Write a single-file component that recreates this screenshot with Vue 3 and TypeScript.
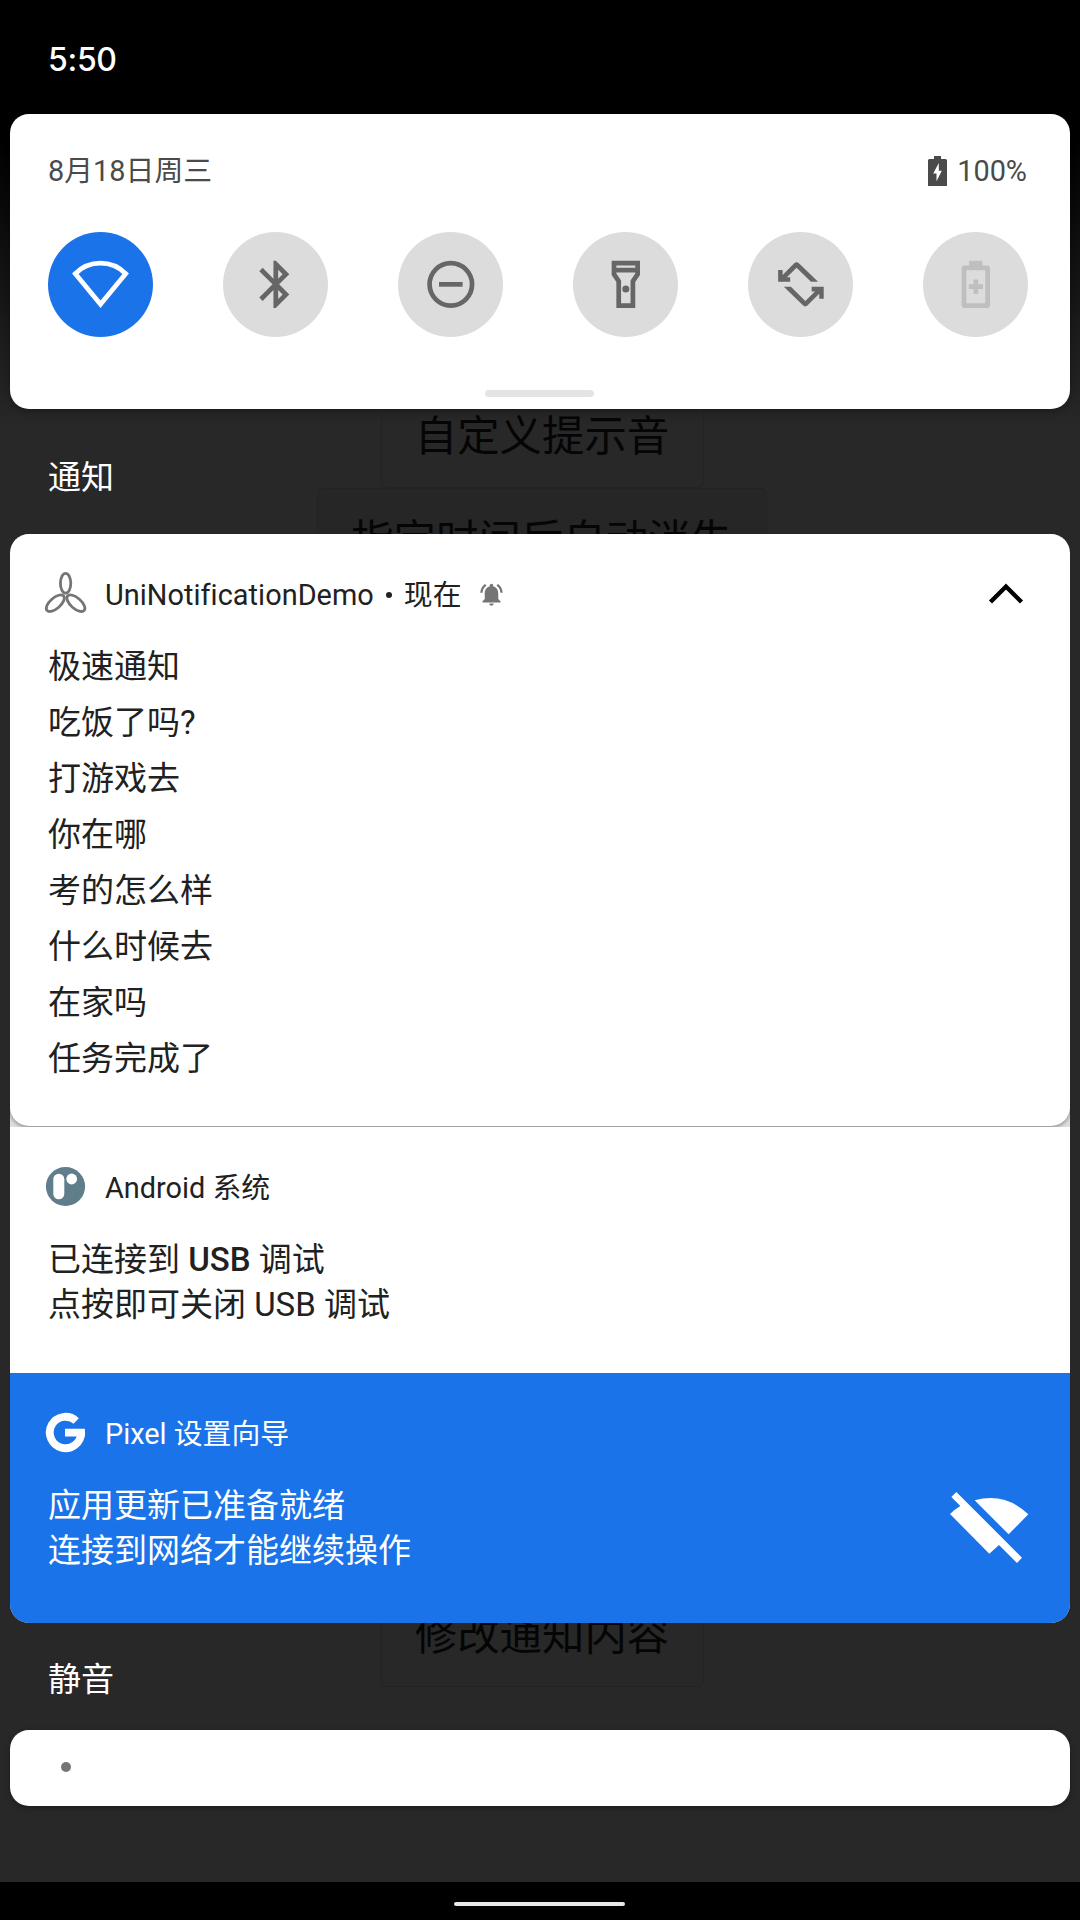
<script setup lang="ts">
interface Tile {
  name: string
  state: 'on' | 'off' | 'disabled'
}

const tiles: Tile[] = [
  { name: 'wifi', state: 'on' },
  { name: 'bluetooth', state: 'off' },
  { name: 'dnd', state: 'off' },
  { name: 'flashlight', state: 'off' },
  { name: 'rotate', state: 'off' },
  { name: 'saver', state: 'disabled' },
]

const messages: string[] = [
  '极速通知',
  '吃饭了吗?',
  '打游戏去',
  '你在哪',
  '考的怎么样',
  '什么时候去',
  '在家吗',
  '任务完成了',
]
</script>

<template>
  <div class="screen">
    <div class="backdrop">
      <div class="app-button first">自定义提示音</div>
      <div class="app-button wide">指定时间后自动消失</div>
      <div class="app-button last">修改通知内容</div>
    </div>

    <div class="shade">
      <header class="status"><span class="clock">5:50</span></header>

      <section class="quick card">
        <div class="quick-head">
          <span>8月18日周三</span>
          <span class="battery">
            <svg width="19" height="30" viewBox="0 0 19 30">
              <path fill="#4a4a4a" d="M6 0h7v3h4.500q1.500 0 1.500 1.500V30H0V4.500Q0 3 1.500 3H6z" />
              <path fill="#fff" d="M10.800 7L5.200 17.500h3.300V25.200L13.800 14.700h-3z" />
            </svg>
            100%
          </span>
        </div>
        <div class="tiles">
          <div v-for="tile in tiles" :key="tile.name" class="tile" :class="tile.state">
            <svg v-if="tile.name === 'wifi'" class="full" viewBox="0 0 105 105">
              <path d="M27.300 41.700A35.500 35.500 0 0 1 77.700 41.700L52.500 72.300z" fill="none" stroke="#fff" stroke-width="4.800" />
            </svg>
            <svg v-else class="glyph" viewBox="0 0 24 24">
              <path
                v-if="tile.name === 'bluetooth'"
                transform="translate(.2 0)"
                d="M17.710 7.710L12 2h-1v7.590L6.410 5 5 6.410 10.590 12 5 17.590 6.410 19 11 14.410V22h1l5.710-5.710-4.300-4.290zM13 5.830l1.880 1.880L13 9.590zm1.880 10.460L13 18.170v-3.760z"
              />
              <template v-else-if="tile.name === 'dnd'">
                <circle cx="12.200" cy="12" r="9" fill="none" stroke="currentColor" stroke-width="2" />
                <path d="M7.200 11h10v2h-10z" />
              </template>
              <template v-else-if="tile.name === 'flashlight'">
                <g transform="translate(.2 0)">
                  <path fill-rule="evenodd" d="M6 2h12v6l-2 3v11H8V11L6 8zM8 4v1h8V4zM8 7v.4l2 3V20h4v-9.600l2-3V7z" />
                  <circle cx="12" cy="14" r="1.500" />
                </g>
              </template>
              <template v-else-if="tile.name === 'rotate'">
                <path d="M2.600 5.900H4.500V8L9.400 3.100q1-.9 2 0L19.500 10.940H16.500L10.400 4.950 6.300 9H7.700V10.940H2.600z" />
                <path transform="rotate(180 12.250 12)" d="M2.600 5.900H4.500V8L9.400 3.100q1-.9 2 0L19.500 10.940H16.500L10.400 4.950 6.300 9H7.700V10.940H2.600z" />
              </template>
              <g v-else transform="translate(.2 0)">
                <path fill-rule="evenodd" d="M9.200 2h5.600v2h1.900Q18 4 18 5.300V20.700Q18 22 16.700 22H7.300Q6 22 6 20.700V5.300Q6 4 7.300 4h1.900zM8 6v14h8V6z" />
                <path d="M11 10h2v2h2v2h-2v2h-2v-2H9v-2h2z" />
              </g>
            </svg>
          </div>
        </div>
        <div class="handle"></div>
      </section>

      <h2 class="section-title alerts">通知</h2>

      <section class="group">
        <article class="notice expanded">
          <div class="notice-head">
            <svg class="app-icon" viewBox="0 0 40 42" fill="none" stroke="#757575" stroke-width="2.800">
              <ellipse cx="20.600" cy="10.300" rx="5.200" ry="9.900" />
              <ellipse cx="10.300" cy="30.200" rx="5.300" ry="11" transform="rotate(49 10.300 30.200)" />
              <ellipse cx="30.900" cy="30.200" rx="5.300" ry="11" transform="rotate(-49 30.900 30.200)" />
            </svg>
            <span class="app-name">UniNotificationDemo</span>
            <span class="separator"></span>
            <span>现在</span>
            <svg class="bell" viewBox="0 0 24 24" fill="#757575">
              <path d="M7.580 4.080L6.150 2.650C3.750 4.480 2.170 7.300 2.030 10.500h2c.15-2.650 1.510-4.970 3.550-6.420zm12.390 6.420h2c-.15-3.200-1.730-6.020-4.120-7.850l-1.420 1.430c2.020 1.450 3.390 3.770 3.540 6.420zM18 11c0-3.070-1.640-5.640-4.500-6.320V4c0-.83-.67-1.500-1.500-1.500s-1.500.67-1.500 1.500v.68C7.630 5.360 6 7.920 6 11v5l-2 2v1h16v-1l-2-2zM12 22c1.100 0 2-.9 2-2h-4c0 1.100.9 2 2 2z" />
            </svg>
            <svg class="chevron" width="36" height="22" viewBox="0 0 36 22">
              <path d="M2.500 19L18 3.500 33.500 19" fill="none" stroke="#000" stroke-width="4.400" />
            </svg>
          </div>
          <ul class="messages">
            <li v-for="message in messages" :key="message">{{ message }}</li>
          </ul>
        </article>

        <article class="notice system">
          <div class="notice-head">
            <svg class="app-icon" viewBox="0 0 40 42">
              <g transform="translate(.5 -.5)">
                <circle cx="20" cy="21" r="19.600" fill="#607d8b" />
                <rect x="7.800" y="8.200" width="11" height="25.600" rx="5.500" fill="#fff" />
                <circle cx="26.200" cy="13.500" r="5.400" fill="#fff" />
              </g>
            </svg>
            <span>Android 系统</span>
          </div>
          <div class="copy">
            <span>已连接到 <strong>USB</strong> 调试</span>
            <span>点按即可关闭 USB 调试</span>
          </div>
        </article>

        <article class="notice setup">
          <div class="notice-head">
            <svg class="app-icon" viewBox="0 0 40 42">
              <g transform="translate(.5 -.5)">
                <path d="M30.700 9.500A15.700 15.700 0 1 0 35.700 21" fill="none" stroke="#fff" stroke-width="7.800" />
                <path d="M19.500 17.300H39.300Q39.900 21 39.100 25H19.500z" fill="#fff" />
              </g>
            </svg>
            <span>Pixel 设置向导</span>
          </div>
          <div class="setup-body">
            <div class="copy">
              <span>应用更新已准备就绪</span>
              <span>连接到网络才能继续操作</span>
            </div>
            <svg class="wifi-off" width="79" height="71" viewBox="149 156 237 213" fill="#fff">
              <path d="M153 171L168 156 365 353 350 369 296 315 267 341 149 222Q163 208 180 198z" />
              <path d="M223 181Q314 156 384 223L325 283z" />
            </svg>
          </div>
        </article>
      </section>

      <h2 class="section-title silent">静音</h2>
      <section class="silent-card card"><i class="dot"></i></section>

      <footer class="navigation"><div class="home-bar"></div></footer>
    </div>
  </div>
</template>

<style>
body {
  margin: 0;
  background: #282828;
}
</style>

<style scoped>
.screen {
  position: relative;
  width: 1080px;
  height: 1920px;
  overflow: hidden;
  background: linear-gradient(#000 0, #000 140px, #282828 430px);
  color: #212121;
  font-family: Roboto, "Noto Sans CJK SC", sans-serif;
  font-size: 33px;
}

.backdrop {
  position: absolute;
  inset: 0;
  display: flex;
  flex-direction: column;
  align-items: center;
}

.app-button {
  box-sizing: border-box;
  flex: none;
  width: 323px;
  height: 104px;
  border: 1px solid #232323;
  border-radius: 6px;
  color: #050505;
  font-size: 42.4px;
  line-height: 104px;
  text-align: center;
  white-space: nowrap;
  margin-left: 4px;
}

.app-button.first {
  margin-top: 384px;
}

.app-button.wide {
  width: 450px;
  background: #262626;
}

.app-button.last {
  margin-top: 991px;
}

.shade {
  position: relative;
  display: flex;
  flex-direction: column;
  height: 100%;
}

.status {
  height: 114px;
  display: flex;
  align-items: center;
  padding-left: 48px;
  box-sizing: border-box;
}

.clock {
  color: #fff;
  font-family: Inter, Roboto, sans-serif;
  font-size: 32px;
  font-weight: 500;
  font-feature-settings: "calt" 0;
  letter-spacing: -0.3px;
  line-height: 40px;
  margin-top: 6px;
}

.card {
  margin: 0 10px;
  border-radius: 19px;
  background: #fff;
  box-shadow: 0 2px 6px rgba(0, 0, 0, 0.3);
}

.quick {
  box-sizing: border-box;
  height: 295px;
  padding: 38px 43px 0 38px;
  display: flex;
  flex-direction: column;
}

.quick-head {
  display: flex;
  justify-content: space-between;
  height: 38px;
  line-height: 38px;
  font-size: 28.875px;
  color: #4a4a4a;
}

.battery {
  display: flex;
  align-items: center;
  gap: 10px;
}

.tiles {
  display: flex;
  gap: 70px;
  margin-top: 42px;
}

.tile {
  flex: none;
  width: 105px;
  height: 105px;
  border-radius: 50%;
  display: flex;
  align-items: center;
  justify-content: center;
  background: #dcdcdc;
  color: #666;
}

.tile.on {
  background: #1a73e8;
}

.tile.disabled {
  color: #bfbfbf;
}

.full {
  width: 105px;
  height: 105px;
}

.glyph {
  width: 56.7px;
  height: 56.7px;
  fill: currentColor;
}

.handle {
  width: 109px;
  height: 7px;
  border-radius: 4px;
  background: #e4e4e4;
  margin: 53px 0 0 437px;
}

.section-title {
  margin: 0;
  padding-left: 48px;
  color: #fff;
  font-size: 33px;
  font-weight: 400;
}

.alerts {
  height: 125px;
  line-height: 138px;
}

.group {
  margin: 0 10px;
  border-radius: 19px;
  overflow: hidden;
  background: #dedede;
}

.notice {
  box-sizing: border-box;
  background: #fff;
  padding: 37px 38px 0 35px;
}

.notice-head {
  display: flex;
  align-items: center;
  height: 48px;
  line-height: 48px;
  font-size: 28.875px;
}

.app-icon {
  width: 40px;
  height: 42px;
  margin: -2px 20px 0 0;
  overflow: visible;
}

.app-name {
  letter-spacing: 0.05px;
}

.separator {
  width: 6px;
  height: 6px;
  border-radius: 50%;
  background: #212121;
  margin: 0 12px 0 12px;
}

.bell {
  width: 27px;
  height: 27px;
  margin: -1px 0 0 16px;
}

.chevron {
  margin: -3px 8px 0 auto;
}

.expanded {
  position: relative;
  height: 592px;
  border-radius: 19px;
  box-shadow: 0 1px 4px rgba(0, 0, 0, 0.45);
}

.messages {
  list-style: none;
  margin: 20px 0 0 3px;
  padding: 0;
  line-height: 56px;
}

.system {
  position: relative;
  height: 246px;
  margin-top: 1px;
}

.copy {
  display: flex;
  flex-direction: column;
  margin: 25px 0 0 3px;
  line-height: 45px;
}

.copy strong {
  font-weight: 500;
}

.setup {
  height: 250px;
  background: #1a73e8;
  color: #fff;
}

.setup-body {
  display: flex;
  justify-content: space-between;
}

.wifi-off {
  margin: 34px 3px 0 0;
}

.silent {
  height: 107px;
  line-height: 114px;
}

.silent-card {
  height: 76px;
  display: flex;
  align-items: center;
}

.dot {
  width: 10px;
  height: 10px;
  margin: -2px 0 0 51px;
  border-radius: 50%;
  background: #757575;
}

.navigation {
  margin-top: auto;
  height: 38px;
  background: #000;
  display: flex;
  justify-content: center;
}

.home-bar {
  width: 171px;
  height: 4px;
  margin: 20px 2px 0 0;
  border-radius: 2px;
  background: #e8e8e8;
}
</style>
